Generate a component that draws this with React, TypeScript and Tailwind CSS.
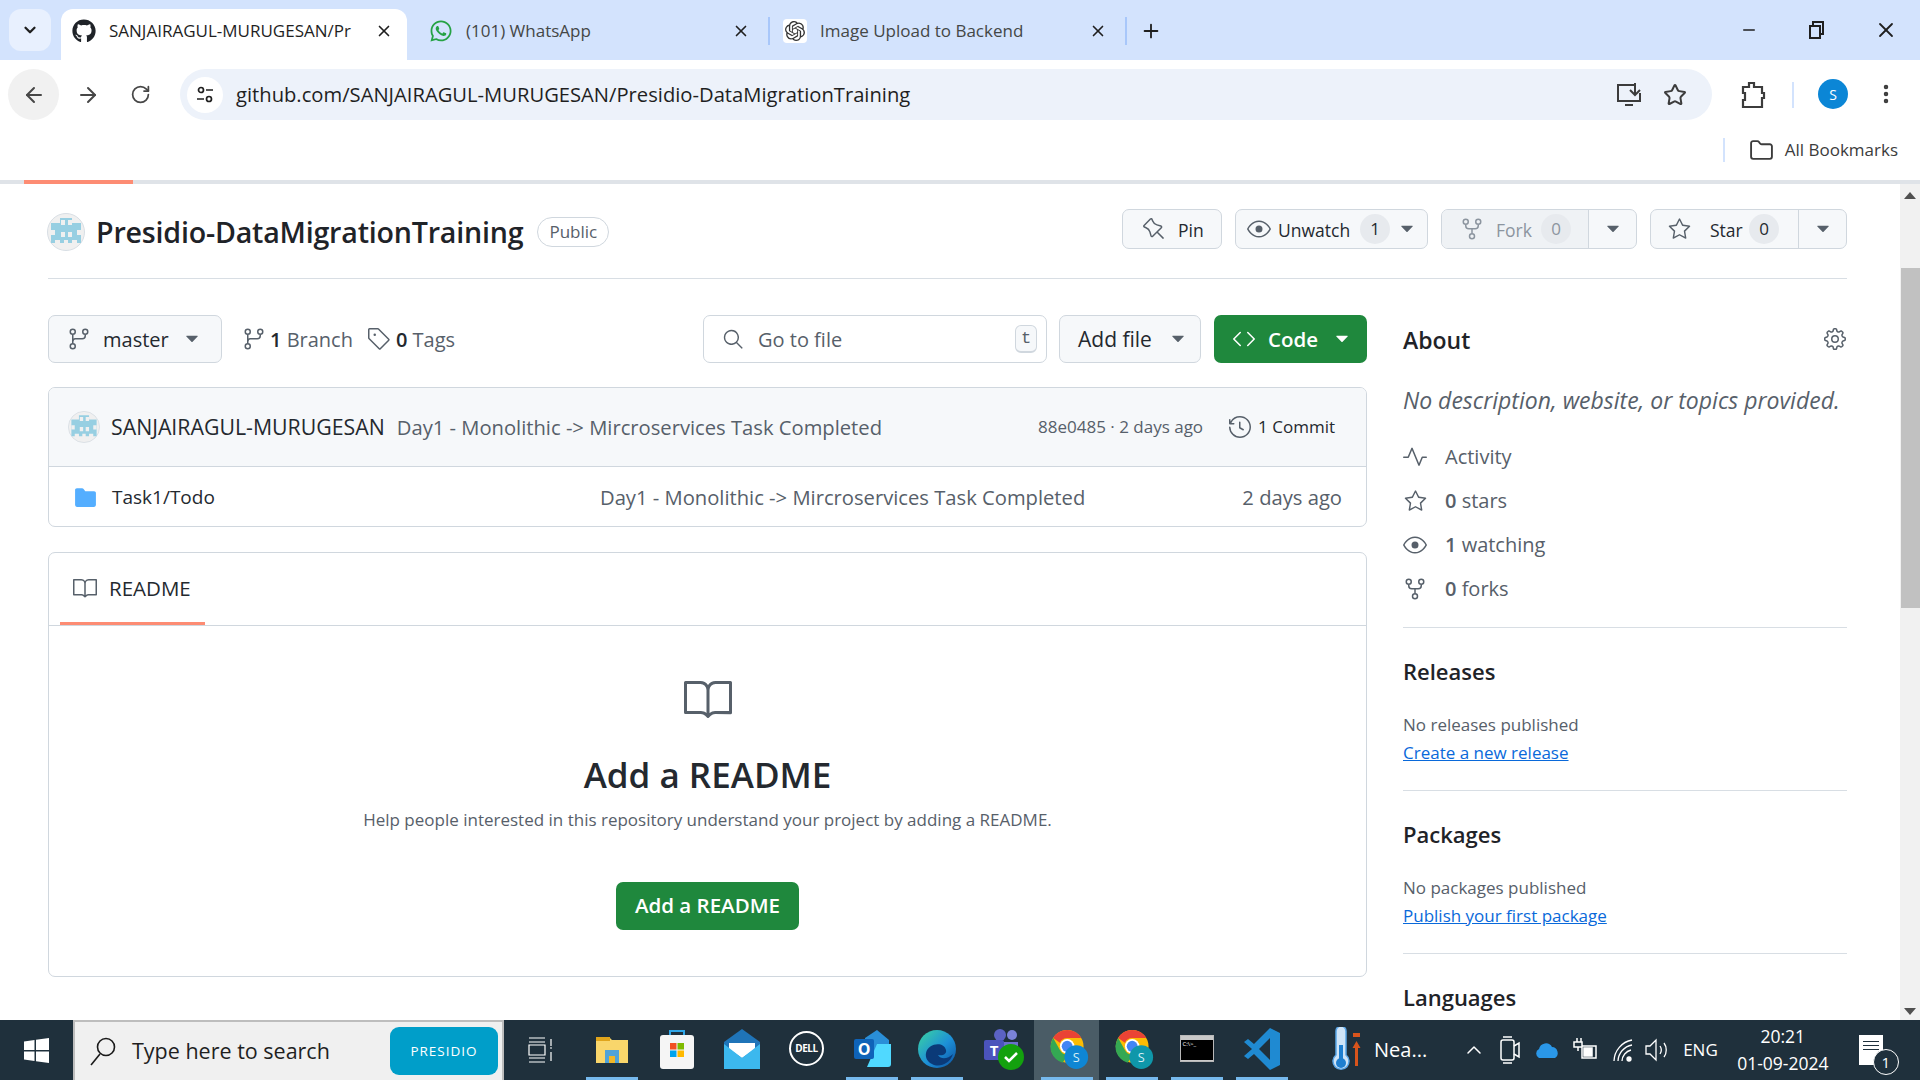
import type { ReactNode } from "react";
import { ArrowLeft, ArrowRight, ChevronDown, ChevronUp, EllipsisVertical, Folder, Minus, Plus, RotateCw, Star, X } from "lucide-react";
import { FaGithub, FaWhatsapp } from "react-icons/fa";
import {
  GoBook,
  GoCode,
  GoEye,
  GoFileDirectoryFill,
  GoGear,
  GoGitBranch,
  GoHistory,
  GoPin,
  GoPulse,
  GoRepoForked,
  GoSearch,
  GoStar,
  GoTag,
  GoTriangleDown,
} from "react-icons/go";
import { SiOpenai } from "react-icons/si";

const Identicon = ({ size }: { size: number }) => (
  <svg width={size} height={size} viewBox="0 0 38 38" className="shrink-0">
    <circle cx="19" cy="19" r="18.5" fill="#f0f0f0" stroke="#d8dee4" />
    <path d="M4 10h9V5h12v5h9v20h-4v-3h-5v3h-4v-3h-4v3h-4v-3H8v3H4z" fill="#97cfe2" />
    <path d="M14 7h4v5h-4zM21 7h4v5h-4zM4 17h4v5H4zM30 17h4v5h-4zM14 19h4v5h-4zM21 19h4v5h-4z" fill="#f0f0f0" />
  </svg>
);

const Tab = ({ icon, title, active, width }: { icon: ReactNode; title: string; active?: boolean; width: string }) => (
  <div
    className={
      active
        ? "flex h-[51px] items-center rounded-t-[12px] bg-white pb-[8px] pl-[11px] pr-[14px] " + width
        : "flex h-[51px] items-center pb-[8px] pl-[14px] pr-[18px] " + width
    }
  >
    <span className="flex w-[24px] shrink-0 justify-center">{icon}</span>
    <span className={active ? "ml-[13px] mr-[14px] flex-1 whitespace-nowrap text-[17px] text-[#1f1f1f]" : "ml-[13px] flex-1 whitespace-nowrap text-[17px] text-[#444746]"}>
      {title}
    </span>
    <X size={18} strokeWidth={2.2} className="shrink-0 text-[#1f1f1f]" />
  </div>
);

const Btn = ({ children, className }: { children: ReactNode; className: string }) => (
  <div className={"flex h-[40px] items-center rounded-[7px] border border-[#d0d7de] bg-[#f6f8fa] text-[17.5px] font-medium text-[#24292f] " + className}>
    {children}
  </div>
);

const Counter = ({ n, dim }: { n: string; dim?: boolean }) => (
  <span className={"flex h-[30px] w-[30px] items-center justify-center rounded-full bg-[#e7eaee] text-[17px] " + (dim ? "text-[#8c959f]" : "text-[#24292f]")}>
    {n}
  </span>
);

const Caret = ({ className }: { className: string }) => <GoTriangleDown size={22} className={className} />;

const RepoHeader = () => (
  <div className="flex h-[95px] items-start border-b border-[#d8dee4] pt-[25px]">
    <div className="-ml-[1px] mt-[3px] flex h-[40px] flex-1 items-center">
      <Identicon size={38} />
      <h1 className="ml-[11px] whitespace-nowrap text-[28.6px] font-semibold tracking-[-0.2px] text-[#1f2328]">Presidio-DataMigrationTraining</h1>
      <span className="ml-[14px] flex h-[30px] w-[72px] items-center justify-center rounded-full border border-[#d0d7de] text-[17px] font-medium text-[#57606a]">
        Public
      </span>
    </div>
    <div className="flex gap-[13px]">
      <Btn className="w-[100px] pl-[19px]">
        <GoPin size={24} className="text-[#57606a]" />
        <span className="ml-[12px] pt-[2px]">Pin</span>
      </Btn>
      <Btn className="w-[193px] pl-[11px]">
        <GoEye size={24} className="text-[#57606a]" />
        <span className="ml-[7px] w-[72px] pt-[2px]">Unwatch</span>
        <span className="ml-[10px]"><Counter n="1" /></span>
        <Caret className="ml-[6px] text-[#57606a]" />
      </Btn>
      <Btn className="w-[196px] overflow-hidden">
        <div className="flex h-full w-[147px] items-center border-r border-[#d0d7de] bg-[#eff2f5] pl-[18px] text-[#8c959f]">
          <GoRepoForked size={24} />
          <span className="ml-[12px] w-[43px] pt-[2px]">Fork</span>
          <span className="ml-[2px]"><Counter n="0" dim /></span>
        </div>
        <Caret className="ml-[13px] text-[#57606a]" />
      </Btn>
      <Btn className="w-[197px]">
        <div className="flex h-full w-[148px] items-center border-r border-[#d0d7de] pl-[17px]">
          <GoStar size={23} className="text-[#57606a]" />
          <span className="ml-[19px] w-[36px] pt-[2px]">Star</span>
          <span className="ml-[3px]"><Counter n="0" /></span>
        </div>
        <Caret className="ml-[13px] text-[#57606a]" />
      </Btn>
    </div>
  </div>
);

const FileNav = () => (
  <div className="flex h-[48px] items-center">
    <Btn className="!h-[48px] w-[174px] pl-[18px] !text-[20px]">
      <GoGitBranch size={24} className="text-[#57606a]" />
      <span className="ml-[12px] w-[78px] pt-[2px]">master</span>
      <Caret className="text-[#57606a]" />
    </Btn>
    <GoGitBranch size={24} className="ml-[20px] text-[#57606a]" />
    <span className="ml-[4px] whitespace-nowrap pt-[2px] text-[20px] text-[#57606a]"><b className="font-semibold text-[#24292f]">1</b> Branch</span>
    <GoTag size={24} className="ml-[14px] text-[#57606a]" />
    <span className="ml-[5px] whitespace-nowrap pt-[2px] text-[20px] text-[#57606a]"><b className="font-semibold text-[#24292f]">0</b> Tags</span>
    <div className="ml-auto flex h-[48px] w-[344px] items-center rounded-[7px] border border-[#d0d7de] bg-white pl-[18px] pr-[9px]">
      <GoSearch size={22} className="text-[#57606a]" />
      <span className="ml-[14px] flex-1 pt-[2px] text-[20px] text-[#57606a]">Go to file</span>
      <span className="flex h-[28px] w-[22px] items-center justify-center rounded-[6px] border border-b-2 border-[#d0d7de] bg-[#f6f8fa] font-['Liberation_Mono',monospace] text-[17px] text-[#57606a]">t</span>
    </div>
    <Btn className="!h-[48px] ml-[12px] w-[142px] pl-[18px] !text-[21px]">
      <span className="w-[89px] pt-[2px]">Add file</span>
      <Caret className="text-[#57606a]" />
    </Btn>
    <div className="ml-[13px] flex h-[48px] w-[153px] items-center rounded-[7px] bg-[#1f883d] pl-[18px] text-[20.5px] font-semibold text-white">
      <GoCode size={24} />
      <span className="ml-[12px] w-[63px]">Code</span>
      <Caret className="text-white" />
    </div>
  </div>
);

const CommitBox = () => (
  <div className="mt-[24px] overflow-hidden rounded-[7px] border border-[#d0d7de]">
    <div className="flex h-[79px] items-center border-b border-[#d0d7de] bg-[#f6f8fa] pl-[19px] pr-[31px]">
      <Identicon size={32} />
      <span className="ml-[11px] whitespace-nowrap text-[21.3px] font-medium text-[#24292f]">SANJAIRAGUL-MURUGESAN</span>
      <span className="ml-[12px] whitespace-nowrap text-[20.2px] text-[#57606a]">Day1 - Monolithic -&gt; Mircroservices Task Completed</span>
      <span className="ml-auto whitespace-nowrap text-[17px] text-[#57606a]">88e0485 · 2 days ago</span>
      <GoHistory size={24} className="ml-[25px] text-[#57606a]" />
      <span className="ml-[6px] whitespace-nowrap text-[17px] font-medium text-[#24292f]">1 Commit</span>
    </div>
    <div className="grid h-[59px] grid-cols-[527px_1fr_auto] items-center pl-[24px] pr-[24px] pt-[2px] text-[20.2px] text-[#57606a]">
      <span className="flex items-center">
        <GoFileDirectoryFill size={25} className="text-[#54aeff]" />
        <span className="ml-[14px] text-[19px] text-[#24292f]">Task1/Todo</span>
      </span>
      <span>Day1 - Monolithic -&gt; Mircroservices Task Completed</span>
      <span>2 days ago</span>
    </div>
  </div>
);

const Readme = () => (
  <div className="mt-[25px] flex h-[425px] flex-col rounded-[7px] border border-[#d0d7de]">
    <div className="h-[73px] border-b border-[#d0d7de]">
      <div className="ml-[11px] flex h-[72px] w-[145px] items-center border-b-[3px] border-[#fd8c73] pl-[13px] pt-[1px]">
        <GoBook size={24} className="text-[#57606a]" />
        <span className="ml-[12px] text-[20.5px] font-medium text-[#24292f]">README</span>
      </div>
    </div>
    <div className="flex flex-1 flex-col items-center pt-[49px]">
      <GoBook size={48} className="text-[#57606a]" />
      <h2 className="mt-[32px] text-[35px] font-semibold leading-[40px] text-[#24292f]">Add a README</h2>
      <p className="mt-[12px] text-[17px] text-[#57606a]">Help people interested in this repository understand your project by adding a README.</p>
      <div className="mt-[49px] flex h-[48px] w-[183px] items-center justify-center rounded-[7px] bg-[#1f883d] text-[20.5px] font-semibold text-white">Add a README</div>
    </div>
  </div>
);

const AboutRow = ({ icon, children }: { icon: ReactNode; children: ReactNode }) => (
  <div className="flex h-[44px] items-center text-[20px] text-[#57606a]">
    <span className="flex w-[24px] justify-center">{icon}</span>
    <span className="ml-[18px]">{children}</span>
  </div>
);

const SideBlock = ({ title, note, link }: { title: string; note: string; link: string }) => (
  <div className="border-b border-[#d8dee4] pb-[25px] pt-[26px]">
    <div className="text-[22px] font-semibold leading-[34px] text-[#1f2328]">{title}</div>
    <div className="mt-[25px] text-[17px] leading-[24px] text-[#57606a]">{note}</div>
    <div className="mt-[4px] text-[17px] leading-[24px] text-[#0969da] underline">{link}</div>
  </div>
);

const Sidebar = () => (
  <div className="w-[444px] shrink-0">
    <div className="flex h-[50px] items-center justify-between">
      <div className="text-[23px] font-semibold text-[#1f2328]">About</div>
      <GoGear size={24} className="-mt-[2px] text-[#57606a]" />
    </div>
    <div className="mt-[20px] whitespace-nowrap text-[23px] italic leading-[30px] text-[#57606a]">No description, website, or topics provided.</div>
    <div className="mt-[20px] border-b border-[#d8dee4] pb-[16px]">
      <AboutRow icon={<GoPulse size={24} />}>Activity</AboutRow>
      <AboutRow icon={<GoStar size={23} />}><b className="font-semibold">0</b> stars</AboutRow>
      <AboutRow icon={<GoEye size={24} />}><b className="font-semibold">1</b> watching</AboutRow>
      <AboutRow icon={<GoRepoForked size={24} />}><b className="font-semibold">0</b> forks</AboutRow>
    </div>
    <SideBlock title="Releases" note="No releases published" link="Create a new release" />
    <SideBlock title="Packages" note="No packages published" link="Publish your first package" />
    <div className="pt-[26px] text-[22px] font-semibold leading-[34px] text-[#1f2328]">Languages</div>
  </div>
);

const ChromeLogo = ({ badge }: { badge: string }) => (
  <svg width="40" height="40" viewBox="0 0 42 44">
    <circle cx="19" cy="19" r="18" fill="#fbbc04" />
    <path d="M19 1a18 18 0 0 1 15.6 9H19a9 9 0 0 0-8 5L3.600 9.800A18 18 0 0 1 19 1z" fill="#ea4335" />
    <path d="M3.600 9.800 11 23a9 9 0 0 0 9 5l-6 9A18 18 0 0 1 3.600 9.800z" fill="#34a853" />
    <circle cx="19" cy="19" r="8" fill="#fff" />
    <circle cx="19" cy="19" r="6" fill="#4285f4" />
    <circle cx="29" cy="31" r="13" fill={badge} />
    <text x="29" y="36" textAnchor="middle" fontSize="14" fill="#d7eef5">S</text>
  </svg>
);

const TaskSlot = ({ children, running, active }: { children: ReactNode; running?: boolean; active?: boolean }) => (
  <div className={"flex h-[60px] w-[65px] flex-col items-center " + (active ? "bg-[#4a5c66]" : "")}>
    <div className="flex h-[57px] items-center justify-center">{children}</div>
    <div className={"h-[3px] w-[52px] " + (running ? "bg-[#76b9ed]" : "")} />
  </div>
);

const Taskbar = () => (
  <div className="flex h-[60px] shrink-0 items-stretch bg-[#1f303c] text-white">
    <div className="flex w-[73px] items-center justify-center">
      <svg width="25" height="25" viewBox="0 0 25 25" fill="#fff">
        <path d="M0 3.500 10.500 2v10H0zM12 1.800 25 0v12H12zM0 13.500h10.500V23L0 21.500zM12 13.500h13V25l-13-1.800z" />
      </svg>
    </div>
    <div className="flex w-[431px] items-center border-2 border-b-0 border-[#bdbdbd] bg-[#f0f0f0] pl-[14px] pr-[4px]">
      <svg width="28" height="30" viewBox="0 0 28 30" fill="none" stroke="#1a1a1a" strokeWidth="1.6">
        <circle cx="17" cy="11" r="8.500" />
        <path d="M11 18 2 29" />
      </svg>
      <span className="ml-[15px] flex-1 text-[21.5px] text-[#1f1f1f]">Type here to search</span>
      <div className="flex h-[48px] w-[108px] items-center justify-center rounded-[9px] bg-[#009ec9] text-[13.5px] font-medium tracking-[1px] text-white">PRESIDIO</div>
    </div>
    <div className="ml-[3px] flex w-[72px] items-center justify-center pr-[7px]">
      <svg width="26" height="26" viewBox="0 0 26 26" fill="none" stroke="#fff" strokeWidth="1.200">
        <path d="M2 1h16M2 5h16M2 8h16v10H2zM2 21h16M2 25h16M24 2v7M24 15v9M23 11h2" />
      </svg>
    </div>
    <TaskSlot running>
      <svg width="34" height="30" viewBox="0 0 34 30">
        <path d="M1 3h13l3 3h16v23H1z" fill="#f9d66b" />
        <path d="M1 3h14v4H1z" fill="#e0a51c" />
        <path d="M10 16h14v13H10z" fill="#4fa3d9" />
        <path d="M14 22h6v7h-6z" fill="#f0b72a" />
      </svg>
    </TaskSlot>
    <TaskSlot>
      <svg width="36" height="42" viewBox="0 0 36 42">
        <path d="M11 8V3h14v5" fill="none" stroke="#2fa6e8" strokeWidth="2" />
        <rect x="1" y="7" width="34" height="34" rx="3" fill="#f5f5f5" />
        <path d="M11 15h6.500v6.500H11z" fill="#f25022" />
        <path d="M18.500 15H25v6.500h-6.500z" fill="#7fba00" />
        <path d="M11 22.500h6.500V29H11z" fill="#00a4ef" />
        <path d="M18.500 22.500H25V29h-6.500z" fill="#ffb900" />
      </svg>
    </TaskSlot>
    <TaskSlot>
      <svg width="38" height="40" viewBox="0 0 38 40">
        <path d="M19 0 37 13v27H1V13z" fill="#1f74b8" />
        <path d="M6 14h26v6l-13 9-13-9z" fill="#fff" />
        <path d="M1 15v25h36V15L19 29z" fill="#3cb8ee" />
      </svg>
    </TaskSlot>
    <TaskSlot>
      <div className="flex h-[35px] w-[35px] items-center justify-center rounded-full border-2 border-white text-[10px] font-bold tracking-[-0.5px]">DELL</div>
    </TaskSlot>
    <TaskSlot running>
      <svg width="38" height="38" viewBox="0 0 38 38">
        <path d="M12 8 24 0l12 10v18H12z" fill="#2a8fd8" />
        <path d="M24 14h14v20a3 3 0 0 1-3 3H14z" fill="#50d9ff" />
        <rect x="1" y="9" width="20" height="20" rx="2" fill="#0f63b8" />
        <text x="11" y="25" textAnchor="middle" fontSize="16" fontWeight="700" fill="#fff">O</text>
      </svg>
    </TaskSlot>
    <TaskSlot running>
      <svg width="38" height="38" viewBox="0 0 38 38">
        <defs>
          <linearGradient id="edge" x1="0" y1="0" x2="1" y2="1">
            <stop offset="0" stopColor="#3bd5a0" />
            <stop offset="0.55" stopColor="#1d90d8" />
            <stop offset="1" stopColor="#0b4f9e" />
          </linearGradient>
        </defs>
        <circle cx="19" cy="19" r="19" fill="url(#edge)" />
        <path d="M8 23c2-10 18-12 20-3 1 4-3 6-8 5 3 5 10 4 15-1-3 10-14 14-21 10-4-2-7-6-6-11z" fill="#0b3a78" />
      </svg>
    </TaskSlot>
    <TaskSlot>
      <svg width="40" height="42" viewBox="0 0 40 42" className="ml-[5px]">
        <circle cx="28" cy="7" r="5" fill="#7b83d8" />
        <circle cx="16" cy="7" r="6" fill="#5b62c4" />
        <path d="M8 14h26v18H8z" fill="#6a71cc" />
        <rect x="0" y="12" width="20" height="20" rx="2" fill="#4b53bc" />
        <text x="10" y="28" textAnchor="middle" fontSize="15" fontWeight="700" fill="#fff">T</text>
        <circle cx="27" cy="29" r="13" fill="#13a10e" />
        <path d="m21 29 4 4 8-8" stroke="#fff" strokeWidth="2.500" fill="none" />
      </svg>
    </TaskSlot>
    <TaskSlot running active>
      <span className="ml-[5px]"><ChromeLogo badge="#0e86d4" /></span>
    </TaskSlot>
    <TaskSlot running>
      <span className="ml-[4px]"><ChromeLogo badge="#0f97aa" /></span>
    </TaskSlot>
    <TaskSlot running>
      <div className="h-[27px] w-[34px] border border-[#b9b9b9] bg-[#c9c9c9] pt-[4px]">
        <div className="h-[20px] bg-black pl-[2px] text-[6px] leading-[8px] text-white">C:\&gt;_</div>
      </div>
    </TaskSlot>
    <TaskSlot running>
      <svg width="36" height="42" viewBox="0 0 36 42">
        <path d="M26 0 36 5v32l-10 5-16-16-6 5-4-3 8-7-8-7 4-3 6 5z" fill="#1f8ad2" />
        <path d="M26 10v22L15 21z" fill="#1f303c" />
      </svg>
    </TaskSlot>
    <div className="ml-[34px] flex w-[38px] items-center justify-center">
      <svg width="32" height="46" viewBox="0 0 32 46">
        <path d="M5 4a5 5 0 0 1 10 0v24a8 8 0 1 1-10 0z" fill="#cfe4f7" stroke="#5aa6e8" strokeWidth="1.500" />
        <path d="M8 18h4v22H8z" fill="#1f7fd0" />
        <circle cx="10" cy="36" r="5" fill="#1f7fd0" />
        <path d="M22 6h7v4h-7zM25.500 14l4 7h-2.500v18h-3V21h-2.500z" fill="#d8541c" />
      </svg>
    </div>
    <span className="ml-[8px] flex items-center text-[20px]">Nea...</span>
    <div className="ml-[35px] flex items-center gap-[13px]">
      <ChevronUp size={24} strokeWidth={1.500} />
      <svg width="22" height="30" viewBox="0 0 22 30" fill="none" stroke="#fff" strokeWidth="1.500">
        <rect x="2" y="5" width="13" height="20" rx="2" />
        <path d="m15 11 5-3v14l-5-3M4 2h9M4 28h9" />
      </svg>
      <svg width="26" height="18" viewBox="0 0 26 18"><path d="M5 17a5 5 0 0 1 0-9 7 7 0 0 1 13-2 6 6 0 0 1 3 11z" fill="#2a97e8" /></svg>
      <svg width="26" height="26" viewBox="0 0 26 26" fill="none" stroke="#fff" strokeWidth="1.500">
        <path d="M2 5h2V1M6 5h2V1M1 5h8v5H1zM5 10v4M9 9h14v12H9z" />
        <path d="M11 11h8v8h-8z" fill="#fff" />
      </svg>
      <svg width="26" height="26" viewBox="0 0 26 26" fill="none" stroke="#fff" strokeWidth="1.300">
        <path d="M2 24A22 22 0 0 1 20 3M6 24A17 17 0 0 1 20 8M10 24a12 12 0 0 1 9-11" />
        <circle cx="17" cy="22" r="2" fill="#fff" />
      </svg>
      <svg width="24" height="26" viewBox="0 0 24 26" fill="none" stroke="#fff" strokeWidth="1.300" className="-ml-[6px]">
        <path d="M1 9h4l6-6v20l-6-6H1zM15 9c2 3 2 5 0 8M19 6c3 4 3 10 0 14" />
      </svg>
    </div>
    <span className="ml-[14px] flex items-center text-[17px]">ENG</span>
    <div className="ml-[16px] flex w-[98px] flex-col items-center justify-center text-[17.5px] leading-[27px]">
      <span>20:21</span>
      <span>01-09-2024</span>
    </div>
    <div className="ml-[27px] flex w-[40px] items-center justify-center">
      <div className="flex h-[30px] w-[24px] flex-col gap-[3px] bg-white px-[4px] pt-[6px]">
        <div className="h-[1px] bg-[#1f303c]" />
        <div className="h-[1px] bg-[#1f303c]" />
        <div className="h-[1px] bg-[#1f303c]" />
      </div>
      <div className="-ml-[10px] mt-[24px] flex h-[26px] w-[26px] items-center justify-center rounded-full border border-white bg-[#1f303c] text-[15px]">1</div>
    </div>
  </div>
);

const App = () => (
  <div className="flex h-screen w-full flex-col overflow-hidden bg-white font-['Open_Sans',sans-serif]">
    <div className="flex h-[60px] shrink-0 items-end bg-[#d3e3fd] pl-[9px]">
      <div className="mb-[9px] flex h-[42px] w-[42px] items-center justify-center rounded-[12px] bg-[#e8f0fe]">
        <ChevronDown size={18} strokeWidth={3} className="text-[#1f1f1f]" />
      </div>
      <div className="ml-[10px]">
        <Tab active width="w-[346px]" icon={<FaGithub size={24} className="text-[#1f2328]" />} title="SANJAIRAGUL-MURUGESAN/Pr" />
      </div>
      <div className="ml-[8px]">
        <Tab width="w-[353px]" icon={<FaWhatsapp size={24} className="text-[#25a244]" />} title="(101) WhatsApp" />
      </div>
      <div className="mb-[15px] h-[28px] w-[2px] bg-[#a8c7fa]" />
      <div className="-ml-[1px]">
        <Tab width="w-[356px]" icon={<span className="flex h-[24px] w-[24px] items-center justify-center rounded-[4px] bg-white"><SiOpenai size={20} className="text-[#333]" /></span>} title="Image Upload to Backend" />
      </div>
      <div className="mb-[15px] h-[28px] w-[2px] bg-[#a8c7fa]" />
      <Plus size={22} strokeWidth={2} className="mb-[18px] ml-[13px] text-[#1f1f1f]" />
      <div className="mb-[18px] ml-auto flex items-center">
        <Minus size={18} strokeWidth={2} className="text-[#1f1f1f]" />
        <svg width="18" height="18" viewBox="0 0 18 18" fill="none" stroke="#1f1f1f" strokeWidth="2" className="ml-[49px]">
          <rect x="3" y="5" width="10" height="12" />
          <path d="M6 5V1h10v12h-3" />
        </svg>
        <X size={24} strokeWidth={1.800} className="ml-[49px] mr-[22px] text-[#1f1f1f]" />
      </div>
    </div>

    <div className="flex h-[60px] shrink-0 items-start rounded-t-[10px] bg-white pl-[8px] pt-[9px]">
      <div className="flex h-[51px] w-[51px] items-center justify-center rounded-full bg-[#f1f1f1]">
        <ArrowLeft size={24} className="text-[#474747]" />
      </div>
      <div className="flex h-[51px] w-[57px] items-center justify-center">
        <ArrowRight size={24} className="text-[#474747]" />
      </div>
      <div className="flex h-[51px] w-[48px] items-center justify-center">
        <RotateCw size={21} className="text-[#474747]" />
      </div>
      <div className="ml-[16px] flex h-[51px] w-[1532px] items-center rounded-full bg-[#edf2fa] pl-[7px] pr-[25px]">
        <div className="flex h-[36px] w-[36px] items-center justify-center rounded-full bg-white">
          <svg width="20" height="20" viewBox="0 0 20 20" fill="none" stroke="#1f1f1f" strokeWidth="1.700">
            <circle cx="6" cy="5" r="2.500" />
            <path d="M11 5h7M2 14h7" />
            <circle cx="14" cy="14" r="2.500" />
          </svg>
        </div>
        <span className="ml-[13px] flex-1 text-[20.2px] text-[#1f1f1f]">github.com/SANJAIRAGUL-MURUGESAN/Presidio-DataMigrationTraining</span>
        <svg width="26" height="26" viewBox="0 0 26 26" fill="none" stroke="#3c3c3c" strokeWidth="2">
          <path d="M2 9V3h16M2 3v16h22v-8M19 1v12M14 8l5 5 5-5M9 23h8" />
        </svg>
        <Star size={24} strokeWidth={2} className="ml-[21px] text-[#3c3c3c]" />
      </div>
      <svg width="26" height="28" viewBox="0 0 26 28" fill="none" stroke="#3c3c3c" strokeWidth="2.200" className="ml-[28px] mt-[12px]">
        <path d="M3 6h6V2h5v4h8v6h2v5h-2v9H3v-7h2v-7H3z" />
      </svg>
      <div className="ml-[26px] mt-[13px] h-[26px] w-[2px] bg-[#d3e3fd]" />
      <div className="ml-[24px] mt-[10px] flex h-[30px] w-[30px] items-center justify-center rounded-full bg-[#0b86d6] text-[14px] text-white">S</div>
      <EllipsisVertical size={24} strokeWidth={2.500} className="ml-[26px] mt-[13px] text-[#3c3c3c]" />
    </div>

    <div className="flex h-[60px] shrink-0 items-center justify-end pr-[22px]">
      <div className="h-[24px] w-[2px] bg-[#d3e3fd]" />
      <Folder size={25} strokeWidth={1.800} className="ml-[24px] text-[#3c3c3c]" />
      <span className="ml-[11px] text-[17px] text-[#3c3c3c]">All Bookmarks</span>
    </div>

    <div className="h-[4px] shrink-0 bg-[#dfe3e8]">
      <div className="ml-[24px] h-full w-[109px] bg-[#fd8c73]" />
    </div>

    <div className="flex min-h-0 flex-1">
      <div className="min-w-0 flex-1 overflow-hidden pl-[48px] pr-[53px]">
        <RepoHeader />
        <div className="mt-[36px] flex gap-[36px]">
          <div className="w-[1319px] shrink-0">
            <FileNav />
            <CommitBox />
            <Readme />
          </div>
          <Sidebar />
        </div>
      </div>
      <div className="flex w-[20px] shrink-0 flex-col items-center bg-[#f1f1f1]">
        <div className="mt-[8px] h-0 w-0 border-x-[6px] border-b-[7px] border-x-transparent border-b-[#505050]" />
        <div className="ml-[1px] mt-[69px] h-[340px] w-[19px] bg-[#c1c1c1]" />
        <div className="mt-auto mb-[5px] h-0 w-0 border-x-[6px] border-t-[7px] border-x-transparent border-t-[#505050]" />
      </div>
    </div>

    <Taskbar />
  </div>
);

export default App;
